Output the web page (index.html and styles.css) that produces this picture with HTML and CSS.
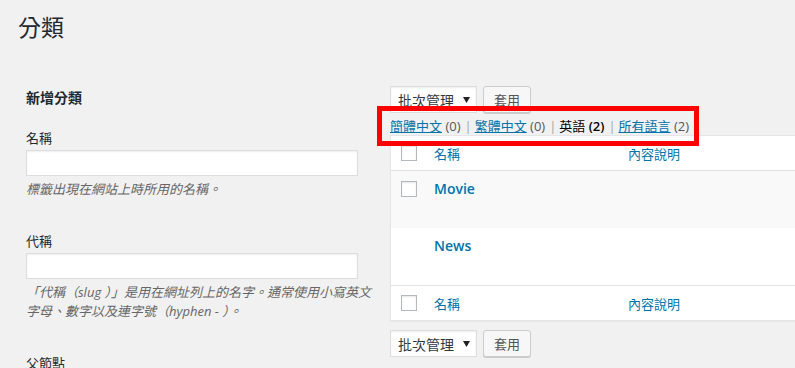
FILE: index.html
```html
<!DOCTYPE html>
<html lang="zh-Hant">
<head>
<meta charset="utf-8">
<title>分類</title>
<link rel="stylesheet" href="styles.css">
</head>
<body>
<div class="wrap">
  <h1 class="page-title">分類</h1>
  <div class="cols">
    <div class="col-left">
      <h2 class="form-title">新增分類</h2>
      <div class="form-field">
        <label class="field-label">名稱</label>
        <input class="text-input" type="text">
        <p class="help">標籤出現在網站上時所用的名稱。</p>
      </div>
      <div class="form-field">
        <label class="field-label">代稱</label>
        <input class="text-input" type="text">
        <p class="help">「代稱（slug ）」是用在網址列上的名字。通常使用小寫英文字母、數字以及連字號（hyphen - ）。</p>
      </div>
      <div class="form-field">
        <label class="field-label">父節點</label>
      </div>
    </div>
    <div class="col-right">
      <div class="bulk">
        <div class="select">批次管理<svg class="arrow" width="7" height="6" viewBox="0 0 7 6"><path d="M0 0H7L3.5 6Z" fill="#222"/></svg></div>
        <button class="btn">套用</button>
      </div>
      <ul class="langs">
        <li><a href="#">簡體中文</a> <span class="count">(0)</span><span class="sep">|</span></li>
        <li><a href="#">繁體中文</a> <span class="count">(0)</span><span class="sep">|</span></li>
        <li class="current">英語 <b>(2)</b><span class="sep">|</span></li>
        <li><a href="#">所有語言</a> <span class="count">(2)</span></li>
      </ul>
      <div class="highlight"></div>
      <div class="table">
        <div class="row head">
          <span class="check"></span>
          <span class="col-name link">名稱</span>
          <span class="col-desc link">內容說明</span>
        </div>
        <div class="row item alt">
          <span class="check"></span>
          <a class="col-name title" href="#">Movie</a>
        </div>
        <div class="row item">
          <span class="check empty"></span>
          <a class="col-name title" href="#">News</a>
        </div>
        <div class="row foot">
          <span class="check"></span>
          <span class="col-name link">名稱</span>
          <span class="col-desc link">內容說明</span>
        </div>
      </div>
      <div class="bulk bottom">
        <div class="select">批次管理<svg class="arrow" width="7" height="6" viewBox="0 0 7 6"><path d="M0 0H7L3.5 6Z" fill="#222"/></svg></div>
        <button class="btn">套用</button>
      </div>
    </div>
  </div>
</div>
</body>
</html>
```

FILE: styles.css
```css
html, body {
  margin: 0;
  padding: 0;
  background: #f1f1f1;
  overflow: hidden;
}
body {
  width: 795px;
  height: 368px;
  font-family: "Open Sans", "Noto Sans CJK TC", sans-serif;
  font-size: 13px;
  color: #444;
}
.wrap {
  padding-left: 18px;
}
.page-title {
  margin: 0;
  padding-top: 13px;
  font-size: 23px;
  line-height: 29px;
  font-weight: 400;
  color: #23282d;
}
.cols {
  display: flex;
  margin-top: 44px;
  gap: 32px;
}
.col-left {
  width: 332px;
  flex: none;
  margin-left: 8px;
  padding-top: 2px;
}
.form-title {
  margin: 0 0 21px;
  font-size: 14px;
  line-height: 20px;
  font-weight: 600;
  color: #23282d;
}
.form-field {
  margin-bottom: 33px;
}
.field-label {
  display: block;
  line-height: 18px;
  margin-bottom: 3px;
  color: #23282d;
}
.text-input {
  display: block;
  box-sizing: border-box;
  width: 332px;
  height: 26px;
  margin: 0;
  border: 1px solid #ddd;
  background: #fff;
  box-shadow: inset 0 1px 2px rgba(0,0,0,.07);
}
.help {
  margin: 4px 0 0;
  line-height: 19px;
  font-style: italic;
  color: #666;
  width: 352px;
}
.col-right {
  position: relative;
  width: 430px;
  flex: none;
}
.bulk {
  display: flex;
  gap: 6px;
  height: 27px;
}
.select {
  box-sizing: border-box;
  width: 87px;
  height: 27px;
  display: flex;
  align-items: center;
  justify-content: space-between;
  padding: 0 6px 0 7px;
  background: #fff;
  border: 1px solid #ddd;
  box-shadow: inset 0 1px 2px rgba(0,0,0,.07);
  font-size: 14px;
  color: #32373c;
}
.arrow {
  display: block;
}
.btn {
  box-sizing: border-box;
  width: 48px;
  height: 27px;
  margin: 0;
  padding: 0;
  border: 1px solid #ccc;
  border-radius: 3px;
  background: #f7f7f7;
  box-shadow: 0 1px 0 #ccc;
  font-family: inherit;
  font-size: 13px;
  color: #555;
}
.langs {
  list-style: none;
  margin: 4px 0 0;
  padding: 0;
  display: flex;
  line-height: 18px;
  white-space: nowrap;
}
.langs a {
  color: #0073aa;
  text-decoration: underline;
}
.count {
  color: #555;
}
.sep {
  color: #a0a5aa;
  margin: 0 3px 0 4px;
}
.current {
  color: #000;
}
.current b {
  font-weight: 600;
}
.highlight {
  position: absolute;
  left: -13px;
  top: 20px;
  width: 322px;
  height: 40px;
  box-sizing: border-box;
  border: 5px solid #ff0000;
}
.table {
  border: 1px solid #e5e5e5;
  background: #fff;
  box-shadow: 0 1px 1px rgba(0,0,0,.04);
}
.row {
  display: flex;
  box-sizing: border-box;
  padding-left: 10px;
}
.head {
  height: 35px;
  align-items: center;
  border-bottom: 1px solid #e1e1e1;
}
.foot {
  height: 35px;
  align-items: center;
  border-top: 1px solid #e1e1e1;
}
.item {
  height: 57px;
  align-items: flex-start;
  padding-top: 10px;
}
.alt {
  background: #f9f9f9;
}
.check {
  flex: none;
  box-sizing: border-box;
  width: 16px;
  height: 16px;
  border: 1px solid #b4b9be;
  background: #fff;
  box-shadow: inset 0 1px 2px rgba(0,0,0,.1);
}
.check.empty {
  visibility: hidden;
}
.col-name {
  margin-left: 17px;
  width: 194px;
  flex: none;
}
.link {
  color: #0073aa;
}
.title {
  color: #0073aa;
  font-size: 14px;
  font-weight: 600;
  text-decoration: none;
  line-height: 16px;
}
.bottom {
  margin-top: 9px;
}
```
